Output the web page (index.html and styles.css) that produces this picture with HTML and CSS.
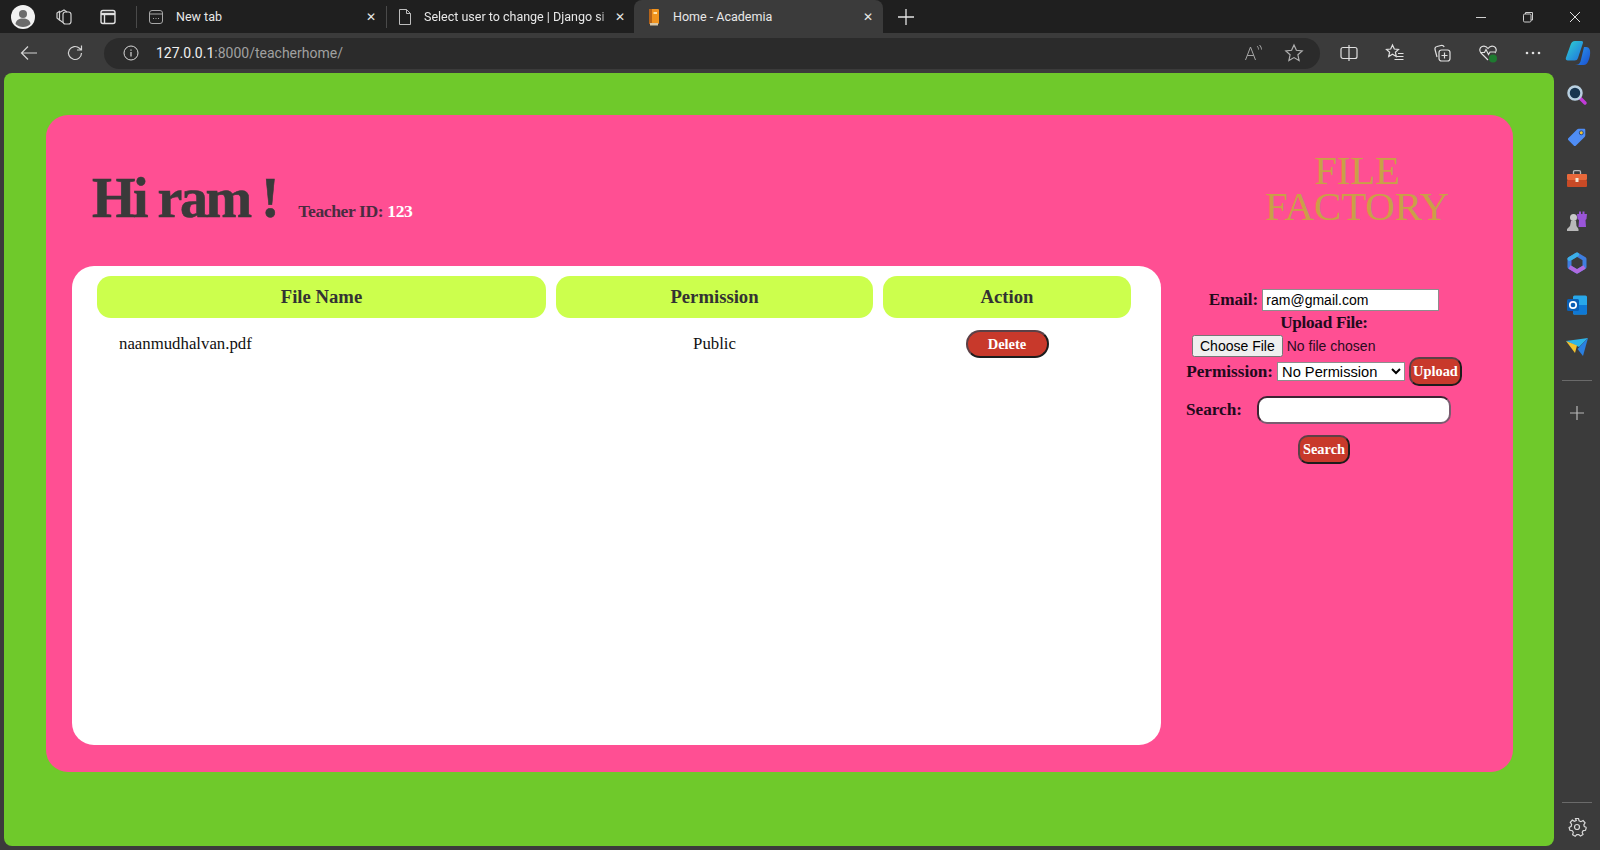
FILE: index.html
```html
<!DOCTYPE html>
<html>
<head>
    <title>Home - Academia</title>
    <link rel="stylesheet" href="styles.css">
</head>
<body>
    <!-- browser tabs -->
    <div class="tabstrip">
        <div class="profile">
            <svg width="24" height="24" viewBox="0 0 24 24"><circle cx="12" cy="12" r="12" fill="#f2f2f2"/><circle cx="12" cy="9" r="4" fill="#6b6b6b"/><path d="M4.500 19c.5-4 3.500-5.500 7.500-5.500s7 1.500 7.500 5.500c-2 2-4.500 3-7.500 3s-5.500-1-7.500-3z" fill="#6b6b6b"/></svg>
        </div>
        <div class="strip-btn workspaces">
            <svg width="20" height="20" viewBox="0 0 20 20" fill="none" stroke="#d0d0d0" stroke-width="1.200"><rect x="9" y="5" width="8" height="12" rx="2.500"/><path d="M9 15.500 5.500 13V5.500L10 3l3 2M6 13.500 3 11V6l3-2"/></svg>
        </div>
        <div class="strip-btn tabs-btn">
            <svg width="18" height="18" viewBox="0 0 18 18" fill="none" stroke="#e0e0e0" stroke-width="1.400"><rect x="2" y="2.500" width="14" height="13" rx="2"/><path d="M2 6h14" stroke-width="2.400"/><path d="M5.500 6v9.500"/></svg>
        </div>
        <div class="strip-sep"></div>
        <div class="tab tab-first">
            <svg class="tab-icon" width="16" height="16" viewBox="0 0 16 16" fill="none" stroke="#a8a8a8" stroke-width="1"><rect x="1.500" y="1.500" width="13" height="13" rx="2.500"/><path d="M1.500 5h13"/><path d="M5 9.500h1M7.500 9.500h1M10 9.500h1" stroke-width="1.200"/></svg>
            <span class="tab-title">New tab</span>
            <span class="tab-close">✕</span>
        </div>
        <div class="strip-sep"></div>
        <div class="tab tab-narrow">
            <svg class="tab-icon" width="16" height="18" viewBox="0 0 16 18" fill="none" stroke="#bdbdbd" stroke-width="1"><path d="M2.500 1.500h7l4 4v11h-11zM9.500 1.500v4h4"/></svg>
            <span class="tab-title fade">Select user to change | Django si</span>
            <span class="tab-close">✕</span>
        </div>
        <div class="tab active">
            <svg class="tab-icon" width="14" height="18" viewBox="0 0 14 18"><rect x="2" y="1" width="10" height="15" rx="1" fill="#f0931e"/><rect x="2" y="1" width="3" height="15" fill="#b5641a"/><rect x="6.500" y="4" width="3.500" height="2" fill="#ffe2a8"/><rect x="3" y="15" width="8" height="2.500" fill="#d8c7a8"/></svg>
            <span class="tab-title">Home - Academia</span>
            <span class="tab-close">✕</span>
        </div>
        <div class="new-tab">
            <svg width="16" height="16" viewBox="0 0 16 16" stroke="#e4e4e4" stroke-width="1.300"><path d="M8 0v16M0 8h16"/></svg>
        </div>
        <div class="window-btns">
            <svg width="12" height="12" viewBox="0 0 12 12" stroke="#cfcfcf" stroke-width="1"><path d="M1 6.500h10"/></svg>
            <svg width="12" height="12" viewBox="0 0 12 12" fill="none" stroke="#cfcfcf" stroke-width="1"><rect x="1.500" y="3" width="7.500" height="8" rx="1.200"/><path d="M3.500 3V1.500h7v7.500H9"/></svg>
            <svg width="12" height="12" viewBox="0 0 12 12" stroke="#e0e0e0" stroke-width="1"><path d="M1 1l10 10M11 1 1 11"/></svg>
        </div>
    </div>

    <!-- address bar -->
    <div class="toolbar">
        <div class="nav-btn">
            <svg width="18" height="16" viewBox="0 0 18 16" fill="none" stroke="#d4d4d4" stroke-width="1.200"><path d="M17 8H1.500M8 1.500 1.500 8 8 14.500"/></svg>
        </div>
        <div class="nav-btn">
            <svg width="18" height="18" viewBox="0 0 18 18" fill="none" stroke="#d4d4d4" stroke-width="1.200"><path d="M15.500 9a6.500 6.500 0 1 1-2-4.700L15.500 6M15.500 1.500V6H11"/></svg>
        </div>
        <div class="address">
            <svg class="info" width="16" height="16" viewBox="0 0 16 16" fill="none" stroke="#d8d8d8" stroke-width="1"><circle cx="8" cy="8" r="7"/><path d="M8 7v4.500M8 4.500v1.200" stroke-width="1.200"/></svg>
            <span class="url"><span class="url-host">127.0.0.1</span>:8000/teacherhome/</span>
            <div class="address-icons">
                <svg width="20" height="18" viewBox="0 0 20 18" fill="none" stroke="#a6a6a6" stroke-width="1"><path d="M1.500 16 6.500 3l5 13M3.200 11.500h6.600M13 2c1 1 1.500 2 1.500 3.500M15.500 1c1.200 1.300 2 2.800 2 4.500"/></svg>
                <svg width="20" height="20" viewBox="0 0 20 20" fill="none" stroke="#b0b0b0" stroke-width="1.200"><path d="m10 2 2.400 5.300 5.800.6-4.300 3.900 1.200 5.700L10 14.600l-5.100 2.900 1.200-5.700L1.800 7.900l5.800-.6z"/></svg>
            </div>
        </div>
        <div class="tool-icons">
            <svg width="18" height="18" viewBox="0 0 18 18" fill="none" stroke="#e0e0e0" stroke-width="1.200"><rect x="1" y="3.500" width="16" height="11" rx="2"/><path d="M9 1v16"/></svg>
            <svg width="20" height="20" viewBox="0 0 20 20" fill="none" stroke="#e0e0e0" stroke-width="1.200"><path d="m7.500 2 1.800 4 4.200.5-3.100 2.800.9 4.200-3.800-2.200-3.800 2.200.9-4.200L1.500 6.500 5.700 6zM13 10.500h5.500M12 13.500h6.500M9.500 16.500h9"/></svg>
            <svg width="20" height="20" viewBox="0 0 20 20" fill="none" stroke="#e0e0e0" stroke-width="1.200"><path d="M5 14 3 6.500C2.700 5 3.500 3.800 5 3.500L9 2.500c1.500-.3 2.700.3 3.200 1.500"/><rect x="7" y="7" width="11" height="11" rx="2.500"/><path d="M12.500 9.500v6M9.500 12.500h6"/></svg>
            <svg width="20" height="20" viewBox="0 0 20 20" fill="none" stroke="#e0e0e0" stroke-width="1.200"><path d="M10 17 3 10C1 8 1.500 4.500 4 3.500 6.500 2.500 8.500 3.500 10 5.500c1.500-2 3.500-3 6-2 2.500 1 3 4.500 1 6.500"/><path d="M2.500 9.500h4l1.500-3 2.500 5 1.500-2.500h5"/><circle cx="15" cy="15.500" r="4" fill="#1e7a30" stroke="none"/></svg>
            <svg width="16" height="4" viewBox="0 0 16 4" fill="#e0e0e0"><circle cx="2" cy="2" r="1.300"/><circle cx="8" cy="2" r="1.300"/><circle cx="14" cy="2" r="1.300"/></svg>
        </div>
        <div class="copilot">
            <svg width="26" height="26" viewBox="0 0 26 26"><defs><linearGradient id="cop1" x1="0" y1="0" x2="1" y2="1"><stop offset="0" stop-color="#2fd4d0"/><stop offset="1" stop-color="#1f6fe0"/></linearGradient><linearGradient id="cop2" x1="0" y1="0" x2="1" y2="1"><stop offset="0" stop-color="#2a9cf0"/><stop offset="1" stop-color="#1b4fd0"/></linearGradient></defs><path d="M10 1h6.500c1.500 0 1.800 1 1.400 2.300L13 18c-.6 1.700-1.500 2.500-3.300 2.500H3c-1.800 0-2.700-1-2-3L5.500 5C6.300 2.500 7.800 1 10 1z" fill="url(#cop1)"/><path d="M19 7h2c2 0 3.500 1 4 3.500 .5 3.500-.3 7-1.500 10-.8 2.500-2.400 4.500-5 4.500H10c3 0 4.500-1 5.500-3.500z" fill="url(#cop2)"/></svg>
        </div>
    </div>

    <div class="browser-main">
        <div class="viewport">
            <div class="card">
                <div class="card-head">
                    <div class="greeting">
                        <h1>Hi ram !</h1>
                        <span class="teacher-id">Teacher ID: <span class="teacher-num">123</span></span>
                    </div>
                    <div class="logo">FILE<br>FACTORY</div>
                </div>
                <div class="card-body">
                    <div class="files-panel">
                        <table class="files">
                            <thead>
                                <tr>
                                    <th class="col-name">File Name</th>
                                    <th class="col-perm">Permission</th>
                                    <th class="col-action">Action</th>
                                </tr>
                            </thead>
                            <tbody>
                                <tr>
                                    <td class="file-name">naanmudhalvan.pdf</td>
                                    <td>Public</td>
                                    <td><button class="btn btn-delete" type="button">Delete</button></td>
                                </tr>
                            </tbody>
                        </table>
                    </div>
                    <div class="side-forms">
                        <form class="upload-form">
                            <div class="form-row">
                                <label for="email">Email:</label>
                                <input class="email-input" type="email" id="email" value="ram@gmail.com">
                            </div>
                            <div class="form-row upload-label"><label for="file">Upload File:</label></div>
                            <div class="form-row"><input class="file-input" type="file" id="file"></div>
                            <div class="form-row perm-row">
                                <label for="permission">Permission:</label>
                                <select class="perm-select" id="permission">
                                    <option>No Permission</option>
                                    <option>Public</option>
                                </select>
                                <button class="btn btn-small" type="submit">Upload</button>
                            </div>
                        </form>
                        <form class="search-form">
                            <div class="form-row search-row">
                                <label for="search">Search:</label>
                                <input class="search-input" type="text" id="search">
                            </div>
                            <div class="form-row"><button class="btn btn-small" type="submit">Search</button></div>
                        </form>
                    </div>
                </div>
            </div>
        </div>

        <!-- edge sidebar -->
        <div class="sidebar">
            <div class="side-item"><svg width="22" height="22" viewBox="0 0 22 22" fill="none"><path d="m13 13 6 6" stroke="#c23bd8" stroke-width="3.500" stroke-linecap="round"/><circle cx="9" cy="9" r="6.500" fill="#17344f" stroke="#b8cfe0" stroke-width="2.500"/></svg></div>
            <div class="side-item"><svg width="20" height="20" viewBox="0 0 20 20"><path d="M1.500 11 10 2.500c.5-.5 1-.7 1.700-.7H17c.8 0 1.300.5 1.300 1.300v5.200c0 .7-.2 1.200-.7 1.700L9 18.500c-.7.7-1.600.7-2.300 0L1.500 13.300c-.7-.7-.7-1.600 0-2.300z" fill="#4f8df5"/><circle cx="14.300" cy="5.800" r="2" fill="#f2c230" stroke="#234a8f"/></svg></div>
            <div class="side-item"><svg width="22" height="20" viewBox="0 0 22 20"><path d="M7.500 5V3c0-.8.500-1.300 1.300-1.300h4.400c.8 0 1.300.5 1.300 1.300v2" fill="none" stroke="#b8b8b8" stroke-width="1.300"/><rect x="1" y="5" width="20" height="6" rx="1" fill="#e8683a"/><rect x="1" y="11" width="20" height="7" rx="1" fill="#c84a26"/><rect x="9.500" y="9" width="3" height="4" fill="#f2e4d0"/></svg></div>
            <div class="side-item"><svg width="22" height="22" viewBox="0 0 22 22"><path d="M11 4h2V1.500h2V4h1.500V1.500h2V4H21l-.5 5-1 1 .5 7H12.500l.5-7-1.500-1z" fill="#9a55d8"/><circle cx="7.500" cy="7.500" r="3.500" fill="#c8c8c8"/><path d="M5 11h5l.5 5 2 3v2H1v-2l3-3z" fill="#b8b8b8"/></svg></div>
            <div class="side-item"><svg width="22" height="22" viewBox="0 0 22 22" fill="none"><path d="M11 2.500 18.500 7v8L11 19.500 3.500 15V7z" stroke="#3f7ee0" stroke-width="4" stroke-linejoin="round"/><path d="M3.500 15 11 19.500l7.500-4.500" stroke="#b06ae0" stroke-width="4" stroke-linejoin="round"/><path d="M3.500 7 11 2.500" stroke="#3cb0e8" stroke-width="4" stroke-linecap="round"/></svg></div>
            <div class="side-item"><svg width="22" height="22" viewBox="0 0 22 22"><rect x="7" y="1.500" width="14" height="19" rx="1.500" fill="#28a8ea"/><path d="M7 11h14v8c0 .8-.7 1.500-1.500 1.500h-11C7.700 20.500 7 19.800 7 19z" fill="#0f78d4"/><rect x="1" y="5" width="12" height="12" rx="1.500" fill="#0a5fb4"/><circle cx="7" cy="11" r="3.200" fill="none" stroke="#fff" stroke-width="1.700"/></svg></div>
            <div class="side-item"><svg width="24" height="20" viewBox="0 0 24 20"><path d="M1 4 23 1 14 10z" fill="#2eb5e8"/><path d="M23 1 18 19 12.500 12z" fill="#2a7fe0"/><path d="M1 4 12 8.500 10 16z" fill="#f2c230"/></svg></div>
            <div class="side-sep"></div>
            <div class="side-plus">
                <svg width="14" height="14" viewBox="0 0 14 14" stroke="#b8b8b8" stroke-width="1.200"><path d="M7 0v14M0 7h14"/></svg>
            </div>
            <div class="side-bottom">
                <div class="side-sep"></div>
                <svg width="20" height="20" viewBox="0 0 20 20" fill="none" stroke="#d8d8d8" stroke-width="1.200"><circle cx="10" cy="10" r="2.500"/><path d="M8.500 1.500h3l.6 2.400 1.800.8 2.200-1.200 2 2.300-1.300 2 .5 1.700 2.200 1-.2 0-.8 2.800-2.300.3-1 1.600.8 2.300-2.500 1.600-1.700-1.600-2 .1-1.600 1.600-2.600-1.500.7-2.400-1-1.600-2.400-.4-.8-2.800 2.100-1.200.4-1.900-1.300-2 2-2.300 2.200 1.200 1.800-.8z"/></svg>
            </div>
        </div>
    </div>
</body>
</html>
```

FILE: styles.css
```css
body {
    margin: 0;
    width: 1600px;
    height: 850px;
    overflow: hidden;
    background-color: #3b3b3b;
    font-family: "Liberation Serif", serif;
}

/* browser chrome */
.tabstrip {
    display: flex;
    align-items: center;
    height: 33px;
    background-color: #1f1f1f;
    color: #e8e8e8;
    font-family: Roboto, sans-serif;
    font-size: 12.5px;
}

.profile {
    display: flex;
    margin-left: 11px;
    margin-right: 19px;
}

.strip-btn {
    display: flex;
    justify-content: center;
    width: 20px;
}

.workspaces {
    margin-right: 24px;
}

.tabs-btn {
    margin-right: 18px;
}

.strip-sep {
    width: 1px;
    height: 22px;
    background-color: #4a4a4a;
}

.tab {
    display: flex;
    align-items: center;
    width: 249px;
    height: 33px;
    box-sizing: border-box;
    padding: 0 8px 0 10px;
}

.tab-first {
    padding-left: 11px;
}

.tab-first .tab-icon {
    margin-right: 12px;
}

.tab-narrow {
    width: 247px;
    padding-right: 7px;
}

.tab.active {
    background-color: #3b3b3b;
    border-radius: 8px 8px 0 0;
    padding: 0 8px 0 13px;
}

.active .tab-icon {
    margin-right: 12px;
}

.tab-icon {
    flex: none;
    margin-right: 11px;
}

.tab-title {
    flex: 1;
    white-space: nowrap;
    overflow: hidden;
}

.tab-title.fade {
    -webkit-mask-image: linear-gradient(to right, #000 92%, transparent);
    mask-image: linear-gradient(to right, #000 92%, transparent);
}

.tab-close {
    flex: none;
    width: 14px;
    font-size: 12px;
    text-align: center;
}

.new-tab {
    display: flex;
    margin-left: 15px;
}

.window-btns {
    display: flex;
    gap: 35px;
    margin-left: auto;
    margin-right: 19px;
}

.toolbar {
    display: flex;
    align-items: center;
    height: 40px;
    color: #fff;
}

.nav-btn {
    display: flex;
    justify-content: center;
    width: 46px;
}

.nav-btn:first-child {
    margin-left: 6px;
}

.address {
    display: flex;
    align-items: center;
    width: 1216px;
    height: 31px;
    margin-left: 6px;
    box-sizing: border-box;
    padding: 0 16px 0 19px;
    border-radius: 16px;
    background-color: #2b2b2b;
}

.info {
    margin-right: 17px;
}

.url {
    color: #a0a0a0;
    font-family: Roboto, sans-serif;
    font-size: 14px;
}

.url-host {
    color: #f0f0f0;
}

.address-icons {
    display: flex;
    align-items: center;
    gap: 20px;
    margin-left: auto;
}

.tool-icons {
    display: flex;
    align-items: center;
    justify-content: space-between;
    width: 201px;
    margin-left: 20px;
}

.copilot {
    display: flex;
    margin-left: 24px;
}

.browser-main {
    display: flex;
    height: 777px;
}

.sidebar {
    display: flex;
    flex-direction: column;
    align-items: center;
    width: 46px;
    height: 777px;
    box-sizing: border-box;
    padding-top: 1px;
}

.side-item {
    display: flex;
    align-items: center;
    height: 42px;
    flex: none;
}

.side-sep {
    flex: none;
    width: 30px;
    height: 1px;
    background-color: #6a6a6a;
}

.sidebar > .side-sep {
    margin-top: 12px;
}

.side-plus {
    display: flex;
    margin-top: 25px;
}

.side-bottom {
    display: flex;
    flex-direction: column;
    align-items: center;
    gap: 14px;
    margin-top: auto;
    padding-bottom: 13px;
}

/* page */
.viewport {
    display: flex;
    flex: none;
    width: 1550px;
    height: 773px;
    margin-left: 4px;
    box-sizing: border-box;
    padding: 42px 0 0 42px;
    background-color: #6fc92b;
    border-radius: 8px;
}

.card {
    flex: none;
    width: 1467px;
    height: 657px;
    box-sizing: border-box;
    padding: 0 26px;
    background-color: #ff4f93;
    border-radius: 22px;
}

.card-head {
    display: flex;
    justify-content: space-between;
    height: 151px;
}

.greeting {
    display: flex;
    align-items: baseline;
    gap: 21px;
    padding-left: 20px;
    padding-top: 48px;
}

h1 {
    margin: 0;
    color: #3a3a3a;
    font-size: 56px;
    line-height: 70px;
    font-weight: bold;
    letter-spacing: -2.5px;
    -webkit-text-stroke: 0.6px #3a3a3a;
}

.teacher-id {
    color: #4a2c40;
    font-size: 17.6px;
    font-weight: bold;
    letter-spacing: -0.4px;
}

.teacher-num {
    color: #fff;
}

.logo {
    width: 260px;
    padding-top: 37px;
    color: #c9a047;
    font-size: 41px;
    line-height: 36px;
    text-align: center;
    letter-spacing: -0.2px;
}

.card-body {
    display: grid;
    grid-template-columns: 1089px 1fr;
}

.files-panel {
    height: 479px;
    box-sizing: border-box;
    padding: 0 15px;
    background-color: #fff;
    border-radius: 22px;
}

.files {
    width: 1054px;
    table-layout: fixed;
    border-collapse: separate;
    border-spacing: 10px;
    color: #111;
    font-size: 16.8px;
}

.files th {
    height: 42px;
    padding: 0;
    box-sizing: border-box;
    background-color: #ccff4d;
    border-radius: 14px;
    color: #333;
    font-size: 18.7px;
}

.col-name {
    width: 449px;
}

.col-perm {
    width: 317px;
}

.col-action {
    width: 248px;
}

.files td {
    padding: 2px 0 3px;
    text-align: center;
}

.files .file-name {
    padding-left: 22px;
    text-align: left;
}

.btn {
    box-sizing: border-box;
    background-color: #c8392b;
    border: 2px solid;
    border-color: #5c4046 #1c1c1c #1c1c1c #5c4046;
    color: #fff;
    font-family: "Liberation Serif", serif;
    font-weight: bold;
    cursor: pointer;
}

.btn-delete {
    display: block;
    width: 83px;
    height: 28px;
    margin: 0 auto;
    padding: 0;
    border-radius: 14px;
    font-size: 14.5px;
}

.btn-small {
    height: 29px;
    padding: 0 3px;
    border-radius: 10px;
    font-size: 14.4px;
}

/* forms on the right */
.side-forms {
    padding-top: 23px;
    color: #220a1c;
    font-size: 17.2px;
    font-weight: bold;
}

.form-row {
    display: flex;
    align-items: center;
    justify-content: center;
    gap: 4px;
}

.upload-label {
    height: 24px;
    letter-spacing: -0.3px;
}

.perm-row .btn-small {
    padding: 0 2px;
}

.email-input {
    box-sizing: border-box;
    width: 177px;
    height: 22px;
    padding: 0 3px;
    border: 1px solid #8d8d8d;
    font-family: "Liberation Sans", sans-serif;
    font-size: 14px;
}

.file-input {
    width: 264px;
    color: #2a0a20;
    font-family: "Liberation Sans", sans-serif;
    font-size: 14px;
    font-weight: normal;
}

.perm-select {
    box-sizing: border-box;
    width: 128px;
    height: 19px;
    border: 1px solid #8d8d8d;
    background-color: #fff;
    font-family: "Liberation Sans", sans-serif;
    font-size: 14.67px;
}

.search-form {
    padding-top: 10px;
}

.search-row {
    gap: 15px;
    margin-bottom: 11px;
    padding-right: 11px;
}

.search-input {
    box-sizing: border-box;
    width: 194px;
    height: 28px;
    border: 2px solid;
    border-color: #3d2433 #7a5c70 #7a5c70 #3d2433;
    border-radius: 10px;
    background-color: #fff;
}
```
